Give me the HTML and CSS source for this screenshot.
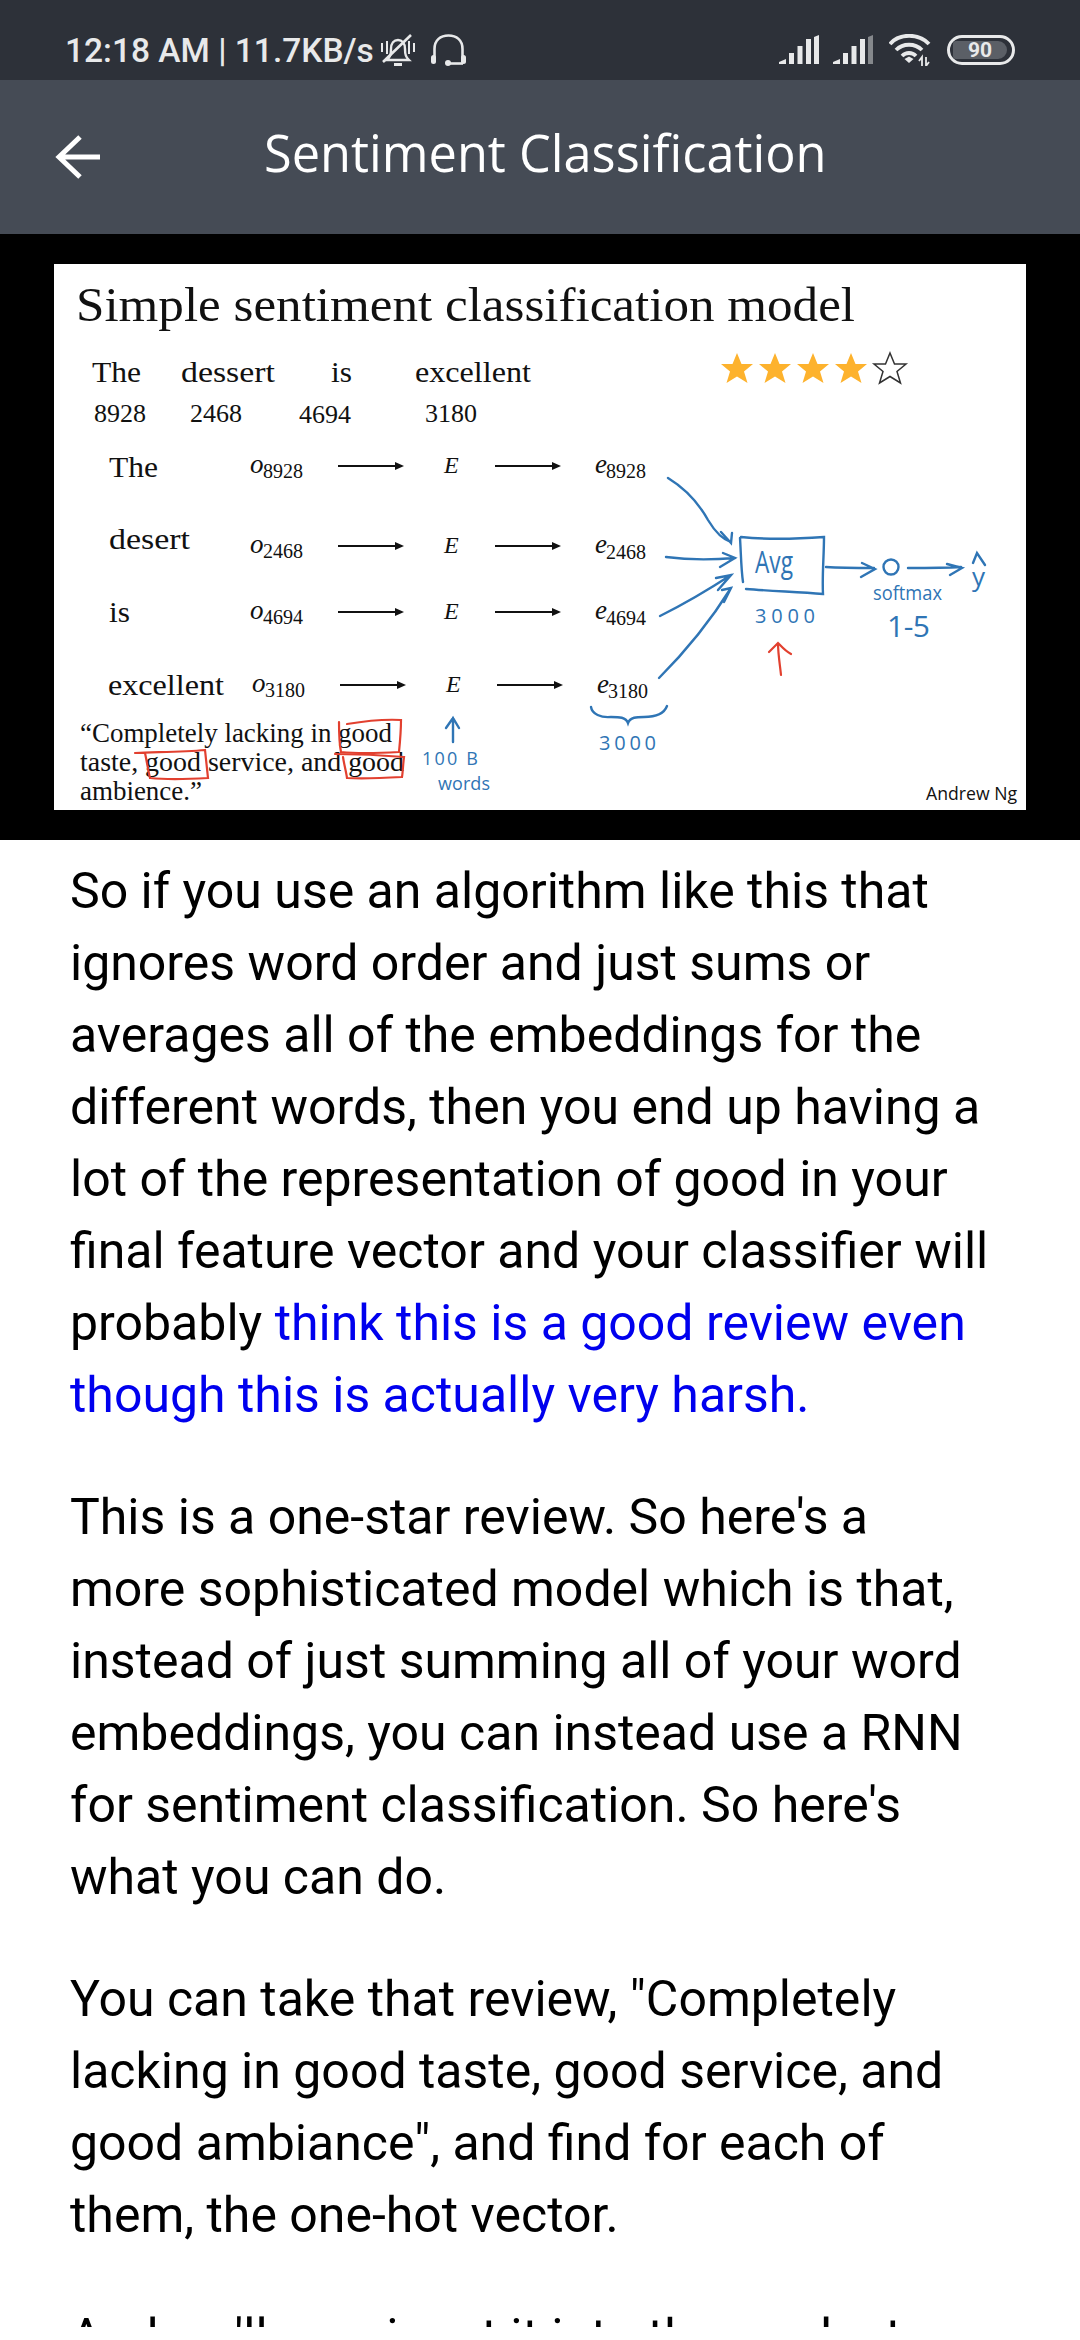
FILE: index.html
```html
<!DOCTYPE html>
<html lang="en">
<head>
  <meta charset="UTF-8">
  <meta name="viewport" content="width=device-width, initial-scale=1.0">
  <title>Sentiment Classification</title>
  <link rel="stylesheet" href="styles.css">
</head>
<body>
  <div class="status-bar">
    <div class="status-left">
      <span class="status-text">12:18 AM | 11.7KB/s</span>
      <svg class="icon-bell" width="34" height="32" viewBox="0 0 34 32" fill="none" stroke="#e8e9ea" stroke-width="2.400">
        <path d="M6 26c3-3 4-5 4-11 0-6 3-9 7-9s7 3 7 9c0 6 1 8 4 11z"/>
        <path d="M13 30.500h8" stroke-width="3"/>
        <path d="M2 28L30 1" stroke-width="2.600"/>
        <path d="M1 9v9M6 7v13M28 7v13M33 9v9" stroke-width="2"/>
      </svg>
      <svg class="icon-headset" width="35" height="32" viewBox="0 0 35 32" fill="none" stroke="#e8e9ea" stroke-width="2.600">
        <path d="M3.500 24V15C3.500 6 9.500 1.500 17.500 1.500S31.500 6 31.500 15v9"/>
        <rect x="0" y="21" width="5" height="9" rx="2.500" fill="#e8e9ea" stroke="none"/>
        <rect x="30" y="21" width="5" height="9" rx="2.500" fill="#e8e9ea" stroke="none"/>
        <path d="M32 29.500H18"/>
        <circle cx="17" cy="29" r="3" fill="#e8e9ea" stroke="none"/>
      </svg>
    </div>
    <div class="status-right">
      <svg width="40" height="30" viewBox="0 0 40 30" fill="#e8e9ea">
        <path d="M0 29v-2l7-3v5z"/>
        <rect x="10" y="18" width="5" height="11"/>
        <rect x="18.500" y="11" width="5" height="18"/>
        <rect x="27" y="4" width="5" height="25"/>
        <path d="M35 2l5-2v29h-5z"/>
      </svg>
      <svg width="40" height="30" viewBox="0 0 40 30" fill="#e8e9ea">
        <path d="M0 29v-2l7-3v5z"/>
        <rect x="10" y="18" width="5" height="11"/>
        <rect x="18.500" y="11" width="5" height="18"/>
        <rect x="27" y="4" width="5" height="25"/>
        <path d="M35 2l5-2v29h-5z" fill="#85888c"/>
      </svg>
      <svg class="icon-wifi" width="42" height="32" viewBox="0 0 42 32" fill="none" stroke="#e8e9ea" stroke-width="3.800">
        <path d="M1 10C10-1 30-1 40 10"/>
        <path d="M7 16c7-7 19-7 26 0"/>
        <path d="M13 22c4-4 10-4 14 0"/>
        <path d="M15.500 25l4.500-2.500 4.500 2.500-4.500 4z" fill="#e8e9ea" stroke="none"/>
        <path d="M33 32v-9l-3 4M37 23v9l3-4" stroke-width="1.800"/>
      </svg>
      <div class="battery"><span class="battery-level">90</span></div>
    </div>
  </div>

  <div class="toolbar">
    <svg class="back-arrow" width="46" height="46" viewBox="0 0 46 46" fill="none" stroke="#fff" stroke-width="5">
      <path d="M45 23H4M25 3L4 23l21 20"/>
    </svg>
    <div class="toolbar-title">Sentiment Classification</div>
  </div>

  <div class="slide-wrap">
    <svg class="slide" width="972" height="546" viewBox="54 264 972 546">
      <rect class="slide-bg" x="54" y="264" width="972" height="546"/>

      <text class="s-title" x="76" y="321" textLength="779" lengthAdjust="spacingAndGlyphs">Simple sentiment classification model</text>

      <text class="s-word" x="92" y="382" textLength="49" lengthAdjust="spacingAndGlyphs">The</text>
      <text class="s-word" x="181" y="382" textLength="94" lengthAdjust="spacingAndGlyphs">dessert</text>
      <text class="s-word" x="331" y="382" textLength="21" lengthAdjust="spacingAndGlyphs">is</text>
      <text class="s-word" x="415" y="382" textLength="116" lengthAdjust="spacingAndGlyphs">excellent</text>
      <text class="s-num" x="94" y="422">8928</text>
      <text class="s-num" x="190" y="422">2468</text>
      <text class="s-num" x="299" y="423">4694</text>
      <text class="s-num" x="425" y="422">3180</text>

      <polygon class="star" points="737,353 741.500,364 753,364 744,371.500 747.500,383 737,376.500 726.500,383 730,371.500 721,364 732.500,364"/>
      <polygon class="star" points="775,353 779.500,364 791,364 782,371.500 785.500,383 775,376.500 764.500,383 768,371.500 759,364 770.500,364"/>
      <polygon class="star" points="813,353 817.500,364 829,364 820,371.500 823.500,383 813,376.500 802.500,383 806,371.500 797,364 808.500,364"/>
      <polygon class="star" points="851,353 855.500,364 867,364 858,371.500 861.500,383 851,376.500 840.500,383 844,371.500 835,364 846.500,364"/>
      <polygon class="star-empty" points="890,353 894.500,364 906,364 897,371.500 900.500,383 890,376.500 879.500,383 883,371.500 874,364 885.500,364"/>

      <text class="s-word" x="109" y="477" textLength="49" lengthAdjust="spacingAndGlyphs">The</text>
      <text class="s-word" x="109" y="549" textLength="81" lengthAdjust="spacingAndGlyphs">desert</text>
      <text class="s-word" x="109" y="622" textLength="21" lengthAdjust="spacingAndGlyphs">is</text>
      <text class="s-word" x="108" y="695" textLength="116" lengthAdjust="spacingAndGlyphs">excellent</text>

      <text class="s-var" x="250" y="473">o</text><text class="s-sub" x="263" y="478">8928</text>
      <text class="s-var" x="250" y="553">o</text><text class="s-sub" x="263" y="558">2468</text>
      <text class="s-var" x="250" y="619">o</text><text class="s-sub" x="263" y="624">4694</text>
      <text class="s-var" x="252" y="692">o</text><text class="s-sub" x="265" y="697">3180</text>

      <text class="s-matrix" x="444" y="473">E</text>
      <text class="s-matrix" x="444" y="553">E</text>
      <text class="s-matrix" x="444" y="619">E</text>
      <text class="s-matrix" x="446" y="692">E</text>

      <text class="s-var" x="595" y="473">e</text><text class="s-sub" x="606" y="478">8928</text>
      <text class="s-var" x="595" y="553">e</text><text class="s-sub" x="606" y="559">2468</text>
      <text class="s-var" x="595" y="619">e</text><text class="s-sub" x="606" y="625">4694</text>
      <text class="s-var" x="597" y="693">e</text><text class="s-sub" x="608" y="698">3180</text>

      <g class="s-arrows">
        <path d="M338 466h58M495 466h58M338 546h58M495 546h58M338 612h58M495 612h58M340 685h58M497 685h58"/>
      </g>
      <g class="s-heads">
        <path d="M395 462l9 4-9 4zM552 462l9 4-9 4zM395 542l9 4-9 4zM552 542l9 4-9 4zM395 608l9 4-9 4zM552 608l9 4-9 4zM397 681l9 4-9 4zM554 681l9 4-9 4z"/>
      </g>

      <text class="s-quote" x="80" y="742" textLength="312" lengthAdjust="spacingAndGlyphs">“Completely lacking in good</text>
      <text class="s-quote" x="80" y="771" textLength="324" lengthAdjust="spacingAndGlyphs">taste, good service, and good</text>
      <text class="s-quote" x="80" y="800" textLength="122" lengthAdjust="spacingAndGlyphs">ambience.”</text>

      <g class="ink-red">
        <path d="M339 722c0 10 0 20 2 30 20 2 40 1 58 0 1-10 2-22 2-32-18-1-36 1-54 4"/>
        <path d="M135 753c22-1 48-1 70-3 1 9 2 18 3 28-18 1-38 2-58 0-2-8-3-16-5-25"/>
        <path d="M335 754c22 0 46 1 69 3-1 7-1 14-2 20-18 1-38 2-55 1-1-7-3-14-4-21"/>
        <path d="M781 675c-1-10-3-21-3-32M769 652c3-3 6-6 9-9 3 3 7 8 13 11"/>
      </g>

      <g class="ink-blue">
        <path d="M668 478c18 11 30 24 40 42 6 10 13 19 23 22M721 532l10 11 1-10"/>
        <path d="M666 557c22 3 46 3 69 1M723 553l12 5-15 9"/>
        <path d="M660 616c24-12 48-26 71-41M716 578l15-3-13 15"/>
        <path d="M659 678c28-28 52-58 72-90M722 590l9-2-7 14"/>
        <path d="M740 538c1 15 1 30 3 44M741 537c28 3 56 2 83 0 0 19-2 38-1 57-26-2-52-3-77-5"/>
        <path d="M826 567c16 1 32 1 48 1M862 563l13 6-14 8"/>
        <circle cx="891" cy="567" r="7.500"/>
        <path d="M908 568c18 0 36 0 53-1M947 564l15 4-12 7"/>
        <path d="M973 563l4-10 8 12"/>
        <path d="M591 707c1 7 10 11 20 10 8 0 15 0 17 6 2-6 9-6 16-6 10 0 20-3 23-11"/>
        <path d="M453 742c0-8 0-16 0-24M446 728l7-10 6 10"/>
      </g>

      <text class="hand hand-avg" x="755" y="573" textLength="38" lengthAdjust="spacingAndGlyphs">Avg</text>
      <text class="hand hand-small" x="755" y="623" textLength="60">3000</text>
      <text class="hand hand-small" x="599" y="750" textLength="57">3000</text>
      <text class="hand hand-small" x="873" y="600" textLength="69" lengthAdjust="spacingAndGlyphs">softmax</text>
      <text class="hand hand-range" x="887" y="637" textLength="43">1-5</text>
      <text class="hand hand-y" x="972" y="586">y</text>
      <text class="hand hand-tiny" x="422" y="765" textLength="56">100 B</text>
      <text class="hand hand-tiny" x="438" y="790" textLength="52">words</text>

      <text class="s-credit" x="926" y="800" textLength="91" lengthAdjust="spacingAndGlyphs">Andrew Ng</text>
    </svg>
  </div>

  <div class="article">
    <p>So if you use an algorithm like this that ignores word order and just sums or averages all of the embeddings for the different words, then you end up having a lot of the representation of good in your final feature vector and your classifier will probably <span class="highlight">think this is a good review even though this is actually very harsh.</span></p>
    <p>This is a one-star review. So here's a more sophisticated model which is that, instead of just summing all of your word embeddings, you can instead use a RNN for sentiment classification. So here's what you can do.</p>
    <p>You can take that review, "Completely lacking in good taste, good service, and good ambiance", and find for each of them, the one-hot vector.</p>
    <p>And we'll now input it into the product</p>
  </div>
</body>
</html>
```

FILE: styles.css
```css
html, body {
  margin: 0;
  padding: 0;
  background-color: #fff;
}
body {
  width: 1080px;
  height: 2340px;
  overflow: hidden;
  font-family: Roboto, sans-serif;
}

/* Status bar */
.status-bar {
  height: 80px;
  box-sizing: border-box;
  padding: 20px 65px 0 65px;
  background-color: #2d3139;
  display: flex;
  justify-content: space-between;
  align-items: center;
  color: #e8e9ea;
}
.status-left {
  display: flex;
  align-items: center;
}
.status-text {
  font-size: 33.500px;
  font-weight: 500;
  white-space: nowrap;
}
.icon-bell {
  margin-left: 7px;
}
.icon-headset {
  margin-left: 16px;
}
.status-right {
  display: flex;
  align-items: center;
  gap: 14px;
}
.icon-wifi {
  margin-left: 2px;
}
.battery {
  width: 68px;
  height: 30px;
  margin-left: 2px;
  box-sizing: border-box;
  border: 3px solid #e8e9ea;
  border-radius: 15px;
  padding: 3px;
  display: flex;
}
.battery-level {
  width: 54px;
  background-color: #5b5f66;
  border-radius: 3px 9px 9px 3px;
  font-size: 21px;
  font-weight: 700;
  line-height: 18px;
  text-align: center;
}

/* Toolbar */
.toolbar {
  height: 154px;
  background-color: #454b55;
  display: flex;
  align-items: center;
  padding-left: 55px;
}
.back-arrow {
  flex: none;
}
.toolbar-title {
  margin: 0 0 10px 163px;
  font-family: "Open Sans", sans-serif;
  font-size: 50.500px;
  color: #fff;
  white-space: nowrap;
}

/* Slide picture */
.slide-wrap {
  background-color: #000;
  padding: 30px 54px;
}
.slide {
  display: block;
}
.slide-bg {
  fill: #fff;
}
.s-title {
  font-family: "Liberation Serif", serif;
  font-size: 48px;
  fill: #111;
}
.s-word {
  font-family: "Liberation Serif", serif;
  font-size: 30px;
  fill: #111;
}
.s-num {
  font-family: "Liberation Serif", serif;
  font-size: 26px;
  fill: #111;
}
.s-quote {
  font-family: "Liberation Serif", serif;
  font-size: 28px;
  fill: #111;
}
.s-var {
  font-family: "Liberation Serif", serif;
  font-size: 27px;
  font-style: italic;
  fill: #111;
}
.s-matrix {
  font-family: "Liberation Serif", serif;
  font-size: 24px;
  font-style: italic;
  fill: #111;
}
.s-sub {
  font-family: "Liberation Serif", serif;
  font-size: 20px;
  fill: #111;
}
.s-credit {
  font-family: "Open Sans", sans-serif;
  font-size: 19px;
  fill: #111;
}
.s-arrows path {
  fill: none;
  stroke: #111;
  stroke-width: 2;
}
.s-heads path {
  fill: #111;
}
.star {
  fill: #fdb22d;
}
.star-empty {
  fill: #fff;
  stroke: #333;
  stroke-width: 1.500;
}
.ink-blue path, .ink-blue circle {
  fill: none;
  stroke: #2f75b5;
  stroke-width: 2.400;
  stroke-linecap: round;
}
.ink-red path {
  fill: none;
  stroke: #e2402f;
  stroke-width: 2.200;
  stroke-linecap: round;
}
.hand {
  font-family: "Open Sans", sans-serif;
  fill: #2f75b5;
}
.hand-avg {
  font-size: 31px;
}
.hand-small {
  font-size: 20px;
}
.hand-range {
  font-size: 30px;
}
.hand-y {
  font-size: 26px;
}
.hand-tiny {
  font-size: 18px;
}

/* Article text, cut off just above the bottom of the screen */
.article {
  height: 1487px;
  box-sizing: border-box;
  overflow: hidden;
  padding: 15px 90px 0 70px;
  font-size: 50px;
  line-height: 72px;
  color: #000;
}
.article p {
  margin: 0 0 50px;
}
.highlight {
  color: #0000ee;
}
```
